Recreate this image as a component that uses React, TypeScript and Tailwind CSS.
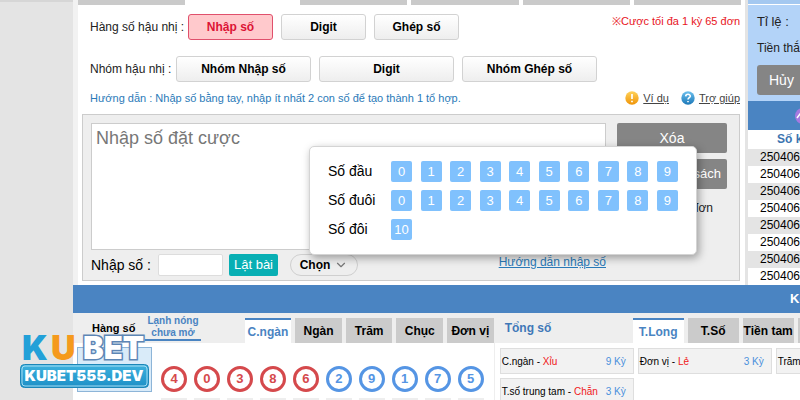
import React, { useState } from "react";
import { ChevronDown } from "lucide-react";

const DIGITS = ["0", "1", "2", "3", "4", "5", "6", "7", "8", "9"];

const BALLS = [
  { n: "4", hot: true },
  { n: "0", hot: true },
  { n: "3", hot: true },
  { n: "8", hot: true },
  { n: "6", hot: true },
  { n: "2", hot: false },
  { n: "9", hot: false },
  { n: "1", hot: false },
  { n: "7", hot: false },
  { n: "5", hot: false },
];

const POSITIONS = ["C.ngàn", "Ngàn", "Trăm", "Chục", "Đơn vị"];
const SUM_TABS = ["T.Long", "T.Số", "Tiền tam", ""];

function ModeButton({ label, wide, active, onClick }: { label: string; wide?: boolean; active?: boolean; onClick?: () => void }) {
  return (
    <button
      onClick={onClick}
      className={`h-[26px] shrink-0 rounded-[3px] border text-[12px] font-bold ${wide ? "w-[135px]" : "w-[85px]"} ${
        active
          ? "border-[#e0506c] bg-[#ffc9cc] text-[#dc1436]"
          : "border-[#d2d2d2] bg-linear-to-b from-white to-[#eeeeee] text-black"
      }`}
    >
      {label}
    </button>
  );
}

function Tab({ label, active, onClick }: { label: string; active: boolean; onClick: () => void }) {
  return (
    <button
      onClick={onClick}
      className={`h-[25px] w-full text-[12px] font-bold whitespace-nowrap ${
        active ? "border-t-2 border-[#4a84c2] bg-white text-[#4a84c2]" : "bg-[#cbcbcb] text-black"
      }`}
    >
      {label}
    </button>
  );
}

function Chip({ label }: { label: string }) {
  return (
    <button className="flex h-[21px] w-[21px] items-center justify-center rounded-[2px] bg-[#80c1fd] text-[13px] text-white">
      {label}
    </button>
  );
}

function HelpIcon({ kind }: { kind: "example" | "help" }) {
  const id = `grad-${kind}`;
  const top = kind === "example" ? "#ffd25a" : "#6cc0ee";
  const bottom = kind === "example" ? "#ef9408" : "#1c78b8";
  return (
    <svg className="h-[14px] w-[14px]" viewBox="0 0 14 14" fill="none" aria-hidden="true">
      <defs>
        <linearGradient id={id} x1="0" y1="0" x2="0" y2="1">
          <stop offset="0" stopColor={top} />
          <stop offset="1" stopColor={bottom} />
        </linearGradient>
      </defs>
      <circle cx="7" cy="7" r="6.7" fill={`url(#${id})`} />
      {kind === "example" ? (
        <path d="M7 3v5M7 9.8v1.4" stroke="#fff" strokeWidth="1.7" />
      ) : (
        <path d="M4.7 5.4C4.8 2.6 9.4 2.7 9.3 5.2 9.2 6.8 7 6.6 7 8.6M7 9.9v1.4" stroke="#fff" strokeWidth="1.6" />
      )}
    </svg>
  );
}

function ResultCell({ name, value, count }: { name: string; value: string; count: string }) {
  return (
    <div className="flex h-[26px] items-center border border-[#dedede] bg-[#f2f2f2] px-px text-[10px] whitespace-nowrap text-black">
      {name}&nbsp;
      <span className="text-[#f01820]">{value}</span>
      <span className="ml-auto pr-1.5 text-[#4a90dc]">{count}</span>
    </div>
  );
}

function PickerPopup() {
  return (
    <div className="absolute top-[31px] right-[42px] w-[388px] rounded-[5px] border border-[#d4d4d4] bg-white px-[18px] py-3.5 text-[14px] text-black shadow-[2px_3px_8px_rgba(0,0,0,0.35)]">
      {["Số đầu", "Số đuôi"].map((name) => (
        <div key={name} className="mb-2 flex items-center">
          <span className="w-[63px]">{name}</span>
          <div className="flex flex-1 justify-between">
            {DIGITS.map((d) => (
              <Chip key={d} label={d} />
            ))}
          </div>
        </div>
      ))}
      <div className="flex items-center">
        <span className="w-[63px]">Số đôi</span>
        <Chip label="10" />
      </div>
    </div>
  );
}

function Logo() {
  return (
    <svg className="absolute top-[328px] left-4 h-[68px] w-[140px]" viewBox="0 0 140 68" role="img" aria-label="KUBET">
      <defs>
        <linearGradient id="badge" x1="0" y1="0" x2="0" y2="1">
          <stop offset="0" stopColor="#3db2de" />
          <stop offset="1" stopColor="#1d8fc6" />
        </linearGradient>
      </defs>
      <rect x="61.5" y="19.5" width="74" height="44" fill="#cfe6f8" fillOpacity="0.8" stroke="#8db5d8" />
      <g fontFamily="Inter, 'Open Sans', sans-serif" fontWeight="900">
        <text x="6" y="32" fontSize="34" fill="#22a0d8">K</text>
        <text x="35" y="32" fontSize="34" fill="#f59a1c">U</text>
        <text x="67" y="31" fontSize="31" fill="#fff" stroke="#5d86b5" strokeWidth="3" paintOrder="stroke">BET</text>
        <rect x="4.5" y="36.5" width="128" height="23" rx="4" fill="url(#badge)" stroke="#1b86b8" />
        <rect x="6" y="38" width="125" height="20" rx="3" fill="none" stroke="#a5ddf3" />
        <text x="68" y="53" fontSize="15" fill="#fff" textAnchor="middle">KUBET555.DEV</text>
      </g>
    </svg>
  );
}

export default function App() {
  const [mode, setMode] = useState("Nhập số");
  const [position, setPosition] = useState("C.ngàn");
  const [sumTab, setSumTab] = useState("T.Long");
  const [pickerOpen, setPickerOpen] = useState(true);

  return (
    <div className="relative flex min-h-screen overflow-hidden bg-[#e4e4e4] font-['Liberation_Sans',Arial,sans-serif] text-[#222]">
      <aside className="w-[73px] shrink-0 border-t-2 border-[#d6d6d6]" />

      <main className="min-w-0 flex-1">
        <div className="flex">
          <section className="min-w-0 flex-1 border-l-5 border-[#f2f2f2] bg-white">
            <div className="grid h-[5px] grid-cols-6 gap-1 pr-1">
              {[0, 1, 2, 3, 4, 5].map((i) => (
                <div key={i} className={i === 1 ? "bg-white" : "bg-[#cacaca]"} />
              ))}
            </div>

            <div className="pr-[5px] pb-1 pl-1">
              <div className="mt-2 flex items-center pl-2">
                <span className="w-[98px] text-[12px] whitespace-nowrap">Hàng số hậu nhị :</span>
                <div className="mt-px flex gap-2">
                  {["Nhập số", "Digit", "Ghép số"].map((m) => (
                    <ModeButton key={m} label={m} active={mode === m} onClick={() => setMode(m)} />
                  ))}
                </div>
                <span className="ml-auto self-start text-[11px] text-[#e8141c]">※Cược tối đa 1 kỳ 65 đơn</span>
              </div>

              <div className="mt-4 flex items-center pl-2">
                <span className="w-[86px] text-[12px] whitespace-nowrap">Nhóm hậu nhị :</span>
                <div className="flex gap-2">
                  {["Nhóm Nhập số", "Digit", "Nhóm Ghép số"].map((m) => (
                    <ModeButton key={m} label={m} wide />
                  ))}
                </div>
              </div>

              <div className="flex h-8 items-center pl-2 text-[11px]">
                <span className="text-[#2a7ab8]">Hướng dẫn : Nhập số bằng tay, nhập ít nhất 2 con số để tạo thành 1 tổ hợp.</span>
                <a href="#vi-du" className="ml-auto flex items-center gap-1 text-[#444] underline">
                  <HelpIcon kind="example" />
                  Ví dụ
                </a>
                <a href="#tro-giup" className="ml-3 flex items-center gap-1 text-[#444] underline">
                  <HelpIcon kind="help" />
                  Trợ giúp
                </a>
              </div>

              <div className="relative border border-[#cccccc] bg-[#eeeeee] px-2 pt-2 pb-1">
                <div className="flex gap-[11px]">
                  <textarea
                    aria-label="Nhập số đặt cược"
                    placeholder="Nhập số đặt cược"
                    className="h-[127px] min-w-0 flex-1 resize-none border border-[#cccccc] bg-white px-1 py-px text-[18px] placeholder:text-[#777]"
                  />
                  <div className="mr-1 flex w-[110px] flex-col text-right text-[14px] text-white">
                    <button className="h-[30px] rounded-[2px] bg-[#858585]">Xóa</button>
                    <button className="mt-1.5 h-[30px] rounded-[2px] bg-[#858585] pr-1.5 text-right text-[13px]">sách</button>
                    <span className="mt-2.5 pr-3.5 text-[12px] text-[#222]">đơn</span>
                  </div>
                </div>

                <div className="mt-1 flex h-[22px] items-center">
                  <label htmlFor="nhap-so" className="w-[67px] text-[14px] whitespace-nowrap text-black">Nhập số :</label>
                  <input id="nhap-so" className="h-[22px] w-[65px] rounded-[2px] border border-[#dddddd] bg-white px-1 text-[13px]" />
                  <button className="ml-1.5 h-[22px] w-[49px] rounded-[2px] bg-[#08afb4] text-[13px] whitespace-nowrap text-white">Lật bài</button>
                  <button
                    onClick={() => setPickerOpen(!pickerOpen)}
                    className="ml-3 flex h-[22px] w-[68px] items-center justify-center gap-1 rounded-full border border-[#cfcfcf] text-[12px] font-bold text-black"
                  >
                    Chọn
                    <ChevronDown className="h-[14px] w-[14px] text-[#777]" />
                  </button>
                  <a href="#huong-dan" className="mr-[125px] mb-1.5 ml-auto text-[12px] text-[#2a7ab8] underline">Hướng dẫn nhập số</a>
                </div>

                {pickerOpen && <PickerPopup />}
              </div>
            </div>
          </section>

          <aside className="ml-[3px] w-[52px] shrink-0 overflow-hidden bg-[#b3d3f8] whitespace-nowrap">
            <div className="h-[5px] border-b border-white bg-[#a4c8f0]" />
            <div className="h-[96px] pl-[9px]">
              <p className="pt-2 text-[13px] leading-[18px]">Tỉ lệ :</p>
              <p className="pt-2 text-[12px] leading-[18px]">Tiền thắ</p>
              <button className="mt-2 h-[30px] w-[76px] rounded-[3px] bg-[#858585] pl-3 text-left text-[14px] text-white">Hủy</button>
            </div>
            <div className="flex h-[29px] items-center bg-[#4a84c2] pl-[47px]">
              <svg className="h-4 w-4 shrink-0" viewBox="0 0 16 16" fill="none" aria-hidden="true">
                <circle cx="8" cy="8" r="8" fill="#a679e0" />
                <path d="M2 10l3-4 3 4 3-4" stroke="#fff" strokeWidth="1.5" />
              </svg>
            </div>
            <table className="w-full bg-white text-[12px] text-black">
              <thead>
                <tr className="h-[19px]">
                  <th className="p-0 pl-[29px] text-left leading-[17px] text-[#3b74b0]">Số k</th>
                </tr>
              </thead>
              <tbody>
                {DIGITS.slice(0, 8).map((d) => (
                  <tr key={d} className="h-[17px] odd:bg-[#e4e4e4]">
                    <td className="p-0 pl-3 leading-[17px]">250406</td>
                  </tr>
                ))}
              </tbody>
            </table>
          </aside>
        </div>

        <div className="flex h-7 items-center justify-end bg-[#4a84c2] text-[13px] font-bold text-white">
          <span className="w-[10px]">Kế</span>
        </div>

        <div className="flex bg-white">
          <section className="w-[58%] shrink-0 border-r border-[#eeeeee]">
            <div className="flex h-[30px] bg-[#eeeeee]">
              <h2 className="w-[72px] pt-2 pl-[19px] text-[11px] leading-[14px] font-bold whitespace-nowrap text-black">Hàng số</h2>
              <a href="#lanh-nong" className="h-[28px] w-[56px] border-b-2 border-[#4a84c2] pt-0.5 text-center text-[10px] leading-3 font-bold whitespace-nowrap text-[#4a84c2]">
                Lạnh nóng
                <br />
                chưa mở
              </a>
              <div className="ml-auto grid w-[249px] grid-cols-5 gap-1 pt-[5px]">
                {POSITIONS.map((p) => (
                  <Tab key={p} label={p} active={position === p} onClick={() => setPosition(p)} />
                ))}
              </div>
            </div>
            <div className="mt-[23px] mr-[10px] ml-[88px] flex justify-between">
              {BALLS.map((b) => (
                <span
                  key={b.n}
                  className={`flex h-[26px] w-[26px] items-center justify-center rounded-full border-3 text-[13px] font-bold ${
                    b.hot ? "border-[#d5494c] text-[#d5494c]" : "border-[#5595e4] text-[#5595e4]"
                  }`}
                >
                  {b.n}
                </span>
              ))}
            </div>
            <div className="mt-1.5 mr-[10px] ml-[88px] flex justify-between">
              {BALLS.map((b) => (
                <div key={b.n} className="h-2 w-[26px] bg-[#eeeeee]" />
              ))}
            </div>
          </section>

          <section className="min-w-0 flex-1 overflow-hidden">
            <div className="flex h-[30px] bg-[#eeeeee]">
              <h2 className="w-[138px] shrink-0 pt-[7px] pl-[10px] text-[12px] leading-4 font-bold text-[#3f78b8]">Tổng số</h2>
              <div className="grid shrink-0 grid-cols-[51px_51px_51px_51px] gap-1 pt-[5px]">
                {SUM_TABS.map((t) => (
                  <Tab key={t} label={t} active={sumTab === t} onClick={() => setSumTab(t)} />
                ))}
              </div>
            </div>
            <div className="grid grid-cols-[134px_134px_134px] gap-1 pt-[5px] pl-[5px]">
              <ResultCell name="C.ngàn -" value="Xỉu" count="9 Kỳ" />
              <ResultCell name="Đơn vị -" value="Lẻ" count="3 Kỳ" />
              <ResultCell name="Trăm" value="" count="" />
              <ResultCell name="T.số trung tam -" value="Chẵn" count="3 Kỳ" />
            </div>
          </section>
        </div>
      </main>

      <Logo />
    </div>
  );
}
